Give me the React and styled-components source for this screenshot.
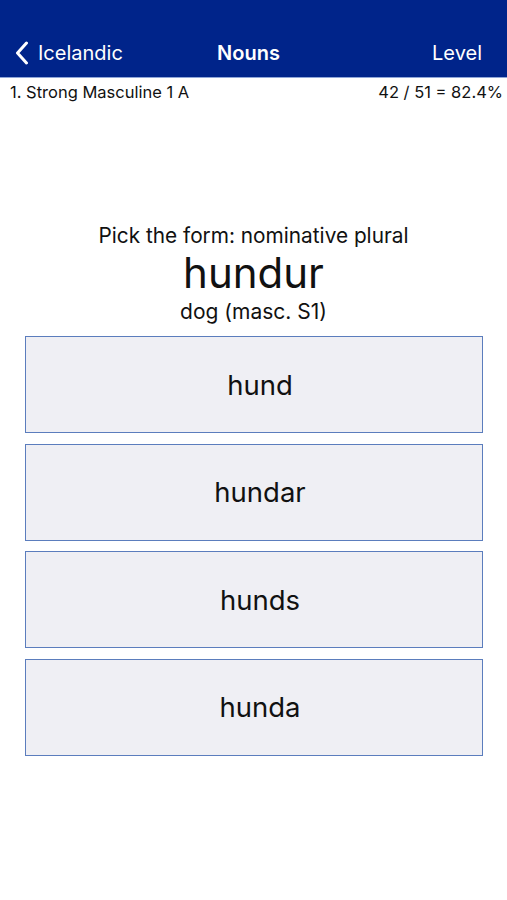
import styled, { createGlobalStyle } from "styled-components";

const Global = createGlobalStyle`
body {
  margin: 0;
  background: white;
  font-family: Inter, "Liberation Sans", Arial, sans-serif;
}
`;

const Page = styled.div`
width: 507px;
min-height: 900px;
background: white;
`;

const NavBar = styled.div`
height: 78px;
background-color: #00248a;
border-bottom: 1px solid #8fa6d8;
box-sizing: border-box;
display: grid;
grid-template-columns: 1fr auto 1fr;
align-items: end;
padding: 0 25px 12px 15px;
color: white;
font-size: 20px;
`;

const BackButton = styled.div`
display: flex;
align-items: center;
gap: 9px;
`;

const NavTitle = styled.div`
font-weight: 600;
`;

const NavRight = styled.div`
justify-self: end;
`;

const InfoRow = styled.div`
display: flex;
justify-content: space-between;
padding: 4px 4px 0 10px;
font-size: 16.5px;
line-height: 20px;
color: #111;
`;

const Prompt = styled.div`
display: flex;
flex-direction: column;
align-items: center;
margin-top: 121px;
color: #111;
`;

const Question = styled.div`
font-size: 20.8px;
line-height: 26px;
`;

const Word = styled.div`
font-size: 42px;
line-height: 48px;
`;

const Meaning = styled.div`
font-size: 21px;
line-height: 29px;
`;

const Choices = styled.div`
display: flex;
flex-direction: column;
gap: 10.5px;
padding: 10px 24px 0 25px;
`;

const Choice = styled.div`
height: 97px;
box-sizing: border-box;
border: 1.5px solid #5b7dbd;
background: #efeff4;
display: flex;
align-items: center;
justify-content: center;
padding-left: 12px;
font-size: 27.5px;
color: #111;
`;

const choices = ["hund", "hundar", "hunds", "hunda"];

export default function App()
{
    return(
        <Page>
            <Global />
            <NavBar>
                <BackButton>
                    <svg width="14" height="24" viewBox="0 0 14 24">
                        <path d="M11.5 2 L2.5 12 L11.5 22" fill="none" stroke="white" strokeWidth="3" strokeLinecap="round" strokeLinejoin="round" />
                    </svg>
                    <span>Icelandic</span>
                </BackButton>
                <NavTitle>Nouns</NavTitle>
                <NavRight>Level</NavRight>
            </NavBar>
            <InfoRow>
                <span>1. Strong Masculine 1 A</span>
                <span>42 / 51 = 82.4%</span>
            </InfoRow>
            <Prompt>
                <Question>Pick the form: nominative plural</Question>
                <Word>hundur</Word>
                <Meaning>dog (masc. S1)</Meaning>
            </Prompt>
            <Choices>
                { choices.map((c) => <Choice key={ c }>{ c }</Choice>) }
            </Choices>
        </Page>
    );
}
